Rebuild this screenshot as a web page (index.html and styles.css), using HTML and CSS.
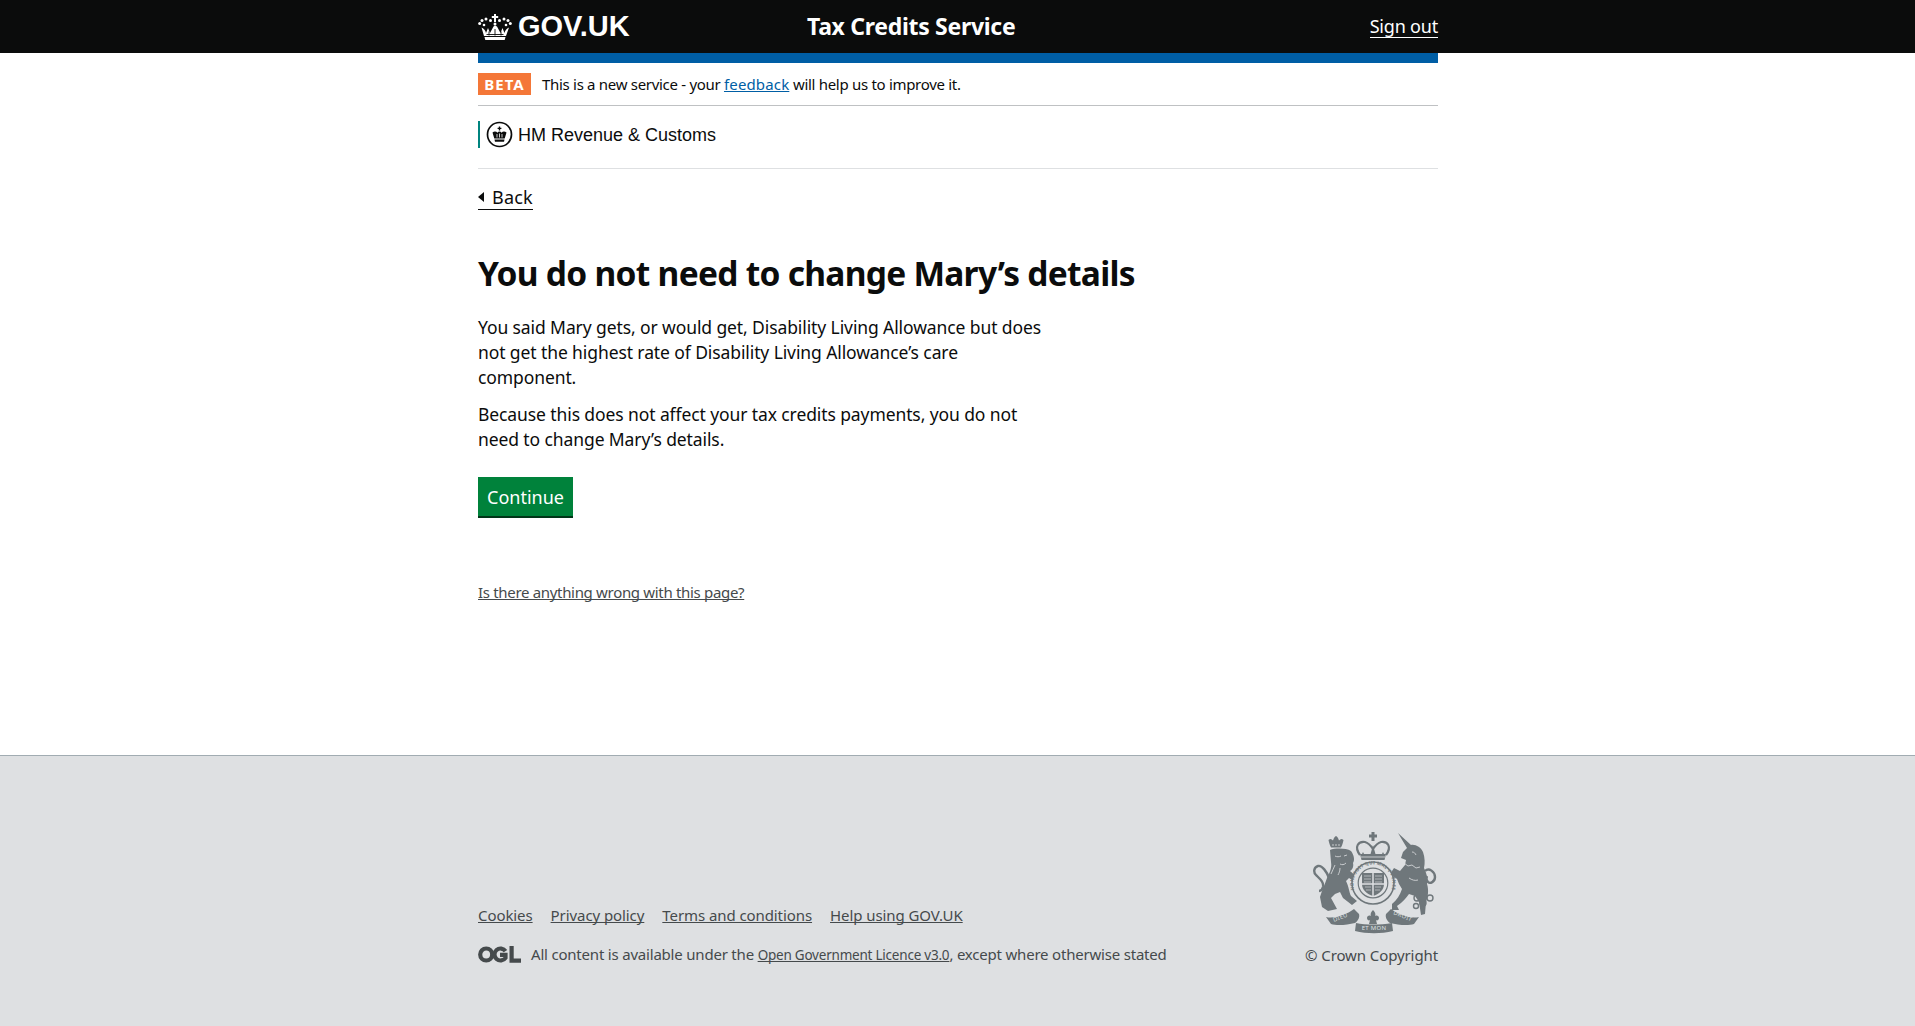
FILE: index.html
```html
<!DOCTYPE html>
<html lang="en">
<head>
  <meta charset="UTF-8" />
  <title>You do not need to change Mary's details</title>
  <link rel="stylesheet" href="styles.css">
</head>
<body>
  <header class="site-header">
    <div class="wrap header-row">
      <a class="logo" href="#">
        <svg class="crown" viewBox="0 0 34 26" width="34" height="26" aria-hidden="true">
          <g fill="#fff">
            <path d="M16 0h2v2h2.200v2H18v4h-2V4h-2.200V2H16z"/>
            <circle cx="1.700" cy="9.500" r="1.500"/><circle cx="32.300" cy="9.500" r="1.500"/>
            <circle cx="4" cy="6.500" r="1.500"/><circle cx="30" cy="6.500" r="1.500"/>
            <circle cx="8" cy="5" r="1.500"/><circle cx="26" cy="5" r="1.500"/>
            <circle cx="12.500" cy="6.500" r="1.500"/><circle cx="21.500" cy="6.500" r="1.500"/>
            <circle cx="17" cy="10" r="1.500"/>
            <circle cx="6" cy="11" r="1.300"/><circle cx="28" cy="11" r="1.300"/>
            <path d="M3.500 13.500c2.500 1 4 3 4.500 5.500l2-5 2 5 3.500-6.500L17 11.500l2 1 3.500 6.500 2-5 2 5c.5-2.500 2-4.500 4.500-5.500L28 22H6z"/>
            <path d="M6.500 23h21l-.8 3H7.300z"/>
          </g>
          <path d="M11 17.500v4M17 15v6.500M23 17.500v4M8.500 20.500h17" stroke="#0b0c0c" stroke-width=".9" fill="none"/>
        </svg>
        <span>GOV.UK</span>
      </a>
      <a class="service-name" href="#">Tax Credits Service</a>
      <a class="sign-out" href="#">Sign out</a>
    </div>
  </header>

  <div class="wrap">
    <div class="blue-bar"></div>

    <div class="phase-banner">
      <strong class="phase-tag">BETA</strong>
      <span>This is a new service - your <a href="#">feedback</a> will help us to improve it.</span>
    </div>

    <div class="org-row">
      <div class="org-logo">
        <svg viewBox="0 0 27 27" width="27" height="27" aria-hidden="true">
          <circle cx="13.500" cy="13.500" r="12" fill="#fff" stroke="#0b0c0c" stroke-width="1.700"/>
          <g fill="#0b0c0c">
            <path d="M12.800 5.500h1.400v1.200h1.200v1.300h-1.200v1.500h-1.400V8h-1.200V6.700h1.200z"/>
            <path d="M6.500 11.500c1.800-1.500 3.800-1.200 5 .2.500-.8 1.200-1.200 2-1.200s1.500.4 2 1.200c1.200-1.400 3.200-1.700 5-.2l-1.800 6H8.300z"/>
            <path d="M8.500 18.500h10l-.5 2.300H9z"/>
          </g>
          <path d="M11 13v3.500M13.500 12.500v4M16 13v3.500" stroke="#fff" stroke-width=".8"/>
        </svg>
        <span>HM Revenue &amp; Customs</span>
      </div>
    </div>

    <main class="main">
      <a class="back-link" href="#">Back</a>

      <h1>You do not need to change Mary’s details</h1>
      <div class="copy">
        <p>You said Mary gets, or would get, Disability Living Allowance but does not get the highest rate of Disability Living Allowance’s care component.</p>
        <p>Because this does not affect your tax credits payments, you do not need to change Mary’s details.</p>
      </div>

      <a class="button" href="#">Continue</a>

      <a class="report-link" href="#">Is there anything wrong with this page?</a>
    </main>
  </div>

  <footer class="site-footer">
    <div class="wrap footer-row">
      <div class="footer-meta">
        <ul class="footer-links">
          <li><a href="#">Cookies</a></li>
          <li><a href="#">Privacy policy</a></li>
          <li><a href="#">Terms and conditions</a></li>
          <li><a href="#">Help using GOV.UK</a></li>
        </ul>
        <div class="licence">
          <svg class="ogl" viewBox="0 0 43 17" width="43" height="17" aria-hidden="true">
            <g fill="none" stroke="#454a4c" stroke-width="4.200">
              <circle cx="8.200" cy="8.500" r="6"/>
              <path d="M27.500 5.200A6 6 0 1 0 27.500 11.800V8.800H22"/>
              <path d="M33.600 0v14.600H43"/>
            </g>
          </svg>
          <span>All content is available under the <a class="licence-link" href="#">Open Government Licence v3.0</a>, except where otherwise stated</span>
        </div>
      </div>
      <div class="crest-block">
        <svg class="crest" viewBox="0 0 125 102" width="125" height="102" aria-hidden="true">
          <defs>
            <path id="garter-arc" d="M41.500 58A19.500 19.500 0 1 1 78.500 58"/>
          </defs>
          <g fill="#6f777b">
            <!-- lion crown -->
            <path d="M15.500 8c2-2 3-1 4.500.5 1-3 2-4 3-4.500 1 .5 2 1.500 3 4.500 1.500-1.500 2.500-2.500 4.500-.5-.5 2-1 5-2.500 7.500H18c-1.500-2.500-2-5.500-2.500-7.500z"/>
            <!-- lion -->
            <path d="M17 18C22 16 33 16 38 19 41 23 42 28 40 31 41 35 39 38 37 39L44 45 41 49 36 46 33 49C36 55 36 60 38 64L44 69 39 73 30 66 27 60 22 62 18 66 24 77 15 79 9 75 7 65C9 58 12 52 14 46 17 40 19 36 18 30z"/>
            <!-- unicorn -->
            <path d="M85 1 98 13C102 12 108 15 110 20 112 26 112 31 111 36 114 42 115 48 114 52 116 58 115 65 113 70L112 82 108 83 106 70 102 64 96 62C93 66 90 70 84 74L86 78 79 78 79 72C84 68 87 63 89 57L86 52 84 47 77 42 81 36 87 39 92 33 93 28 88 26 90 20 94 16z"/>
            <!-- centre crown band -->
            <path d="M47 22h26l-1.500 6h-23z"/>
            <path d="M58.500 0h3v2.500H64v3h-2.500V9h-3V5.500H56v-3h2.500z"/>
            <path d="M57 24l3-11 3 11z"/>
            <path d="M48 24l2-4 2 4zM68 24l2-4 2 4z"/>
            <!-- ribbons -->
            <path d="M13 85c8 2 20-2 28-8l5 5c1 3-1 7-4 9-8 2-18 3-24 1z"/>
            <path d="M106 85c-8 2-20-2-28-8l-5 5c-1 3 1 7 4 9 8 2 18 3 24 1z"/>
            <path d="M43 91c10 2 24 2 36 0l1 8c-12 3-26 3-38 0z"/>
            <path d="M60 78c2 2 3 4 2 6 2-1 4 0 4 2s-2 3-3 2l1 4h-8l1-4c-1 1-3 0-3-2s2-3 4-2c-1-2 0-4 2-6z"/>
          </g>
          <g fill="none" stroke="#6f777b">
            <!-- lion tail, centre crown arcs, unicorn tail and chain -->
            <path stroke-width="2.400" d="M16 46C14 40 9 33 5 34 1 35 0 40 3 43 7 47 11 50 10 55 9.500 57 8 59 6 59"/>
            <path stroke-width="2.200" d="M47 23C41 15 45 9 52 10 56 11 58 14 60 17 62 14 64 11 68 10 75 9 79 15 73 23"/>
            <path stroke-width="2.400" d="M112 39C116 35 122 40 122 45 122 50 117 52 115 50 113 48 113 46 114 44"/>
            <g stroke-width="1.400">
              <circle cx="104" cy="66" r="3"/><circle cx="110" cy="71" r="3"/><circle cx="117" cy="66" r="3"/><circle cx="103" cy="74" r="2.500"/>
            </g>
          </g>
          <!-- light detail on the beasts -->
          <g fill="none" stroke="#dee0e2" stroke-width=".8">
            <path d="M23 12v2M26 12v2M20 12v2M22 24c2 1 4 1 6 0M31 24l3-1M33 31c-2 2-4 2-6 1M22 33c-1 3-3 6-4 9M27 36c0 3-1 5-2 7"/>
            <path d="M91 31l4 3 4-1 4 3 4-1M99 20c2 0 3 1 4 3M96 46c3 2 6 3 9 2M48 25h24"/>
          </g>
          <!-- garter and shield -->
          <circle cx="60" cy="51" r="21" fill="#dee0e2" stroke="#6f777b" stroke-width="1.600"/>
          <circle cx="60" cy="51" r="14.800" fill="none" stroke="#6f777b" stroke-width="1.200"/>
          <text class="crest-garter"><textPath href="#garter-arc" startOffset="50%" text-anchor="middle">HONI SOIT QUI MAL Y PENSE</textPath></text>
          <path d="M49 41h22v11c0 6-5 10-11 12-6-2-11-6-11-12z" fill="#6f777b"/>
          <path d="M60 41v23M49 52h22" stroke="#dee0e2" stroke-width="1.500"/>
          <path d="M51 44h7M51 47h7M51 50h7M62 44h7M62 47h7M62 50h7M52 55h6M53 58h5M62 55h6M62 58h5" stroke="#dee0e2" stroke-width=".6"/>
          <!-- motto -->
          <text class="crest-motto" transform="translate(21 90) rotate(-22)">DIEU</text>
          <text class="crest-motto" transform="translate(80 82) rotate(22)">DROIT</text>
          <text class="crest-motto" x="61" y="98" text-anchor="middle">ET MON</text>
        </svg>
        <span class="copyright">© Crown Copyright</span>
      </div>
    </div>
  </footer>
</body>
</html>
```

FILE: styles.css
```css
* {
  box-sizing: border-box;
}
html, body {
  height: 100%;
}
body {
  margin: 0;
  display: flex;
  flex-direction: column;
  font-family: "Noto Sans", Arial, sans-serif;
  font-size: 17px;
  color: #0b0c0c;
  background: #fff;
}
a {
  color: inherit;
  text-decoration-skip-ink: none;
}
.wrap {
  width: 960px;
  margin-left: 478px;
}

/* header */
.site-header {
  height: 53px;
  background: #0b0c0c;
  color: #fff;
}
.header-row {
  height: 53px;
  display: flex;
  align-items: center;
}
.logo {
  display: flex;
  align-items: center;
  gap: 6px;
  width: 329px;
  font-family: "Liberation Sans", Arial, sans-serif;
  font-size: 29px;
  font-weight: 700;
  color: #fff;
  text-decoration: none;
}
.service-name {
  margin-top: -2px;
  font-size: 23px;
  font-weight: 700;
  letter-spacing: -0.3px;
  text-decoration: none;
}
.sign-out {
  margin-left: auto;
  font-size: 18px;
  letter-spacing: -0.2px;
  text-decoration: none;
  border-bottom: 1px solid #fff;
  line-height: 21px;
}
.blue-bar {
  height: 10px;
  background: #005ea5;
}

/* beta banner */
.phase-banner {
  height: 43px;
  display: flex;
  align-items: center;
  gap: 11px;
  font-size: 15px;
  letter-spacing: -0.3px;
  border-bottom: 1px solid #bfc1c3;
}
.phase-tag {
  width: 53px;
  height: 22px;
  background: #f47738;
  color: #fff;
  font-size: 15px;
  letter-spacing: 1px;
  line-height: 22px;
  text-align: center;
}
.phase-banner a {
  color: #005ea5;
  letter-spacing: 0.15px;
}

/* organisation */
.org-row {
  height: 63px;
  padding-top: 15px;
  border-bottom: 1px solid #dee0e2;
}
.org-logo {
  display: flex;
  align-items: center;
  gap: 5px;
  height: 27px;
  padding-left: 6px;
  border-left: 2px solid #00847f;
  font-family: "Liberation Sans", Arial, sans-serif;
  font-size: 18px;
}
.org-logo span {
  padding-top: 2px;
}

/* main copy */
.main {
  display: flex;
  flex-direction: column;
  align-items: flex-start;
  height: 586px;
}
.back-link {
  position: relative;
  margin-top: 17px;
  padding-left: 14px;
  font-size: 18px;
  line-height: 23px;
  letter-spacing: 0.2px;
  text-decoration: none;
  border-bottom: 1px solid #0b0c0c;
}
.back-link::before {
  content: "";
  position: absolute;
  left: 0;
  top: 6px;
  border-style: solid;
  border-width: 5px 6px 5px 0;
  border-color: transparent #0b0c0c transparent transparent;
}
h1 {
  margin: 43px 0 0;
  font-size: 33.500px;
  line-height: 40px;
  font-weight: 700;
  letter-spacing: -0.72px;
}
.copy {
  width: 580px;
  margin-top: 22px;
  font-size: 17.500px;
  line-height: 25px;
  letter-spacing: -0.1px;
}
.copy p {
  margin: 0 0 12px;
}
.button {
  margin-top: 13px;
  width: 95px;
  height: 39px;
  background: #00823b;
  color: #fff;
  font-size: 18px;
  line-height: 41px;
  text-align: center;
  text-decoration: none;
  box-shadow: 0 2px 0 #003618;
}
.report-link {
  margin-top: 66px;
  font-size: 15px;
  letter-spacing: -0.32px;
  color: #454a4c;
}

/* footer */
.site-footer {
  flex: 1;
  background: #dee0e2;
  border-top: 1px solid #a1acb2;
  color: #454a4c;
}
.footer-row {
  display: flex;
  justify-content: space-between;
  align-items: flex-end;
  padding-top: 76px;
}
.footer-meta {
  margin-bottom: 1px;
}
.footer-links {
  list-style: none;
  margin: 0 0 19px;
  padding: 0;
  display: flex;
  gap: 18px;
  font-size: 15px;
  letter-spacing: -0.08px;
}
.licence {
  display: flex;
  align-items: center;
  gap: 10px;
  font-size: 15px;
  letter-spacing: -0.2px;
}
.licence-link {
  font-size: 13.500px;
  letter-spacing: -0.22px;
}
.crest-block {
  display: flex;
  flex-direction: column;
  align-items: flex-end;
  gap: 11px;
}
.crest {
  display: block;
}
.crest-garter {
  font-size: 4.600px;
  font-weight: 700;
  letter-spacing: 0.3px;
  fill: #6f777b;
}
.crest-motto {
  font-size: 6px;
  letter-spacing: 0.3px;
  fill: #dee0e2;
}
.copyright {
  font-size: 15px;
  letter-spacing: -0.1px;
}
```
